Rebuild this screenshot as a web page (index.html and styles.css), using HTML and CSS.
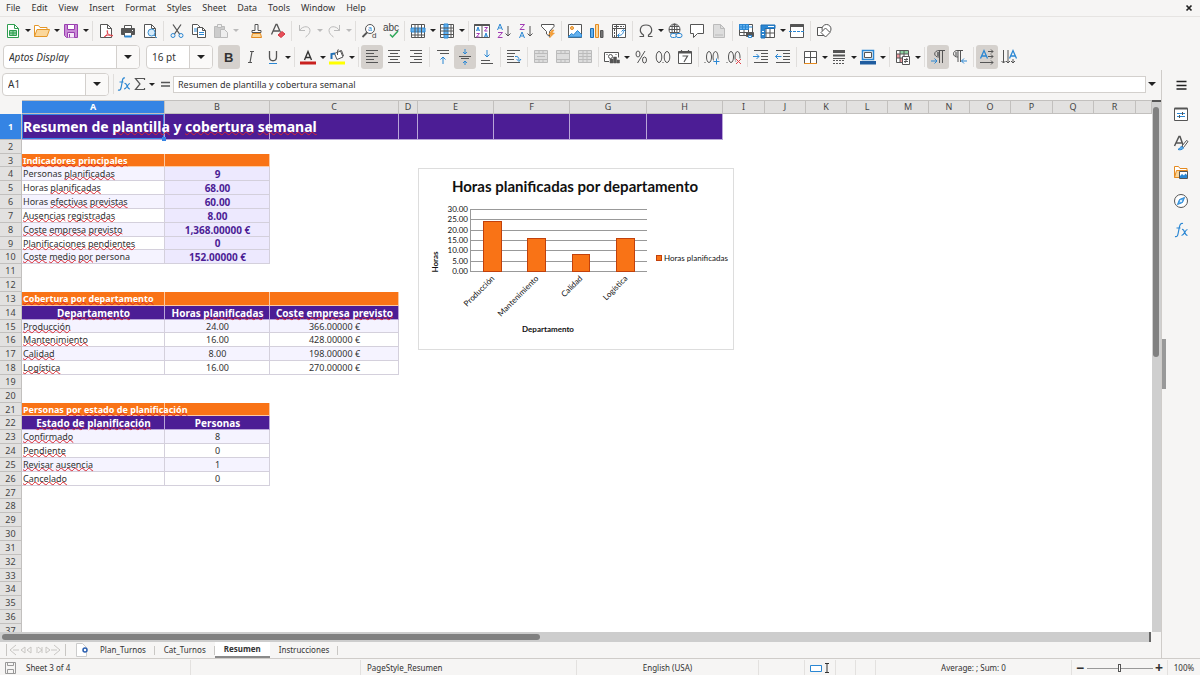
FILE: index.html
```html
<!DOCTYPE html>
<html lang="es">
<head>
<meta charset="utf-8">
<meta name="viewport" content="width=device-width, initial-scale=1">
<title>Resumen de plantilla</title>
<link rel="stylesheet" href="styles.css">
</head>
<body>
<div class="app">
<nav class="menubar" aria-label="Menu">
<button>File</button><button>Edit</button><button>View</button><button>Insert</button><button>Format</button><button>Styles</button><button>Sheet</button><button>Data</button><button>Tools</button><button>Window</button><button>Help</button>
<button class="close" aria-label="Close document"><svg class="icon small" viewBox="0 0 8 8"><path d="M1.500 1.500l5 5M6.500 1.500l-5 5" stroke="#222" stroke-width="1.700"/></svg></button>
</nav>

<div class="toolbar" role="toolbar" aria-label="Standard">
<button class="tool" aria-label="New"><svg class="icon" viewBox="0 0 16 16"><path d="M2.500 1.500h7l4 4v9h-11z" fill="#fff" stroke="#2f9e50"/><path d="M9.500 1.500v4h4" stroke="#2f9e50"/><path d="M4.500 7.500h7v5h-7zM4.500 10h7M8 7.500v5" fill="#8fd3a2" stroke="#2f9e50"/></svg></button><button class="drop" aria-label="New options"></button>
<button class="tool" aria-label="Open"><svg class="icon" viewBox="0 0 16 16"><path d="M.500 13.500v-11h4l1.500 2h7v2" fill="#fff" stroke="#e59728"/><path d="M3 6.500h12.500l-2.500 7H.500z" fill="#fbd79b" stroke="#e59728"/></svg></button><button class="drop" aria-label="Open options"></button>
<button class="tool" aria-label="Save"><svg class="icon" viewBox="0 0 16 16"><path d="M1.500 1.500h13v13h-11l-2-2z" fill="#c98ad6" stroke="#9a3fb0"/><path d="M4.500 1.500h7v5h-7z" fill="#fff" stroke="#9a3fb0"/><path d="M4.500 14.500v-5h7v5" fill="#f5e8f8" stroke="#9a3fb0"/><path d="M6.500 11v3.500" stroke="#9a3fb0"/></svg></button><button class="drop" aria-label="Save options"></button>
<i class="sep"></i>
<button class="tool" aria-label="Export as PDF"><svg class="icon" viewBox="0 0 16 16"><path d="M2.500 1.500h7l4 4v9h-11z" fill="#fff"/><path d="M9.500 1.500v4h4"/><path d="M7 13.500c3-2 3-5 2-6.500M9 8c0 3 3 5 5.500 5M6 14c2-2 5-2.500 9-1.500" stroke="#e0434c"/></svg></button>
<button class="tool" aria-label="Print"><svg class="icon" viewBox="0 0 16 16"><path d="M4.500 5V2.500h7V5" fill="#fff"/><path d="M1.500 5.500h13v6h-13z" fill="#555"/><path d="M12 7.500h1" stroke="#fff"/><path d="M4.500 9.500h7v4h-7z" fill="#fff"/><path d="M4.500 13.500h7" stroke="#2b87d3" stroke-width="2"/></svg></button>
<button class="tool" aria-label="Print preview"><svg class="icon" viewBox="0 0 16 16"><path d="M2.500 1.500h7l4 4v9h-11z" fill="#fff"/><path d="M9.500 1.500v4h4"/><circle cx="9.500" cy="9.500" r="3.500" fill="#d6ebfa" stroke="#3a8fd0"/><path d="M12 12l3 3" stroke="#3a8fd0"/></svg></button>
<i class="sep"></i>
<button class="tool" aria-label="Cut"><svg class="icon" viewBox="0 0 16 16"><path d="M4 1.500l6.500 9.500M12 1.500L5.500 11" stroke-width="1.300"/><circle cx="4" cy="12.500" r="2" stroke="#2b87d3"/><circle cx="12" cy="12.500" r="2" stroke="#2b87d3"/></svg></button>
<button class="tool" aria-label="Copy"><svg class="icon" viewBox="0 0 16 16"><path d="M1.500 1.500h5l3 3v7h-8z" fill="#fff"/><path d="M6.500 4.500h5l3 3v7h-8z" fill="#fff"/><path d="M11.500 4.500v3h3"/><path d="M3 6h3M3 8h3M8 9.500h5M8 11.500h5" stroke="#2b87d3"/></svg></button>
<button class="tool off" aria-label="Paste" disabled><svg class="icon" viewBox="0 0 16 16"><path d="M1.500 3.500h10v11h-10z" fill="#ccc"/><path d="M4.500 1.500h4v3h-4z" fill="#eee"/><path d="M7.500 6.500h4l3 3v5h-7z" fill="#eee"/></svg></button><button class="drop off" aria-label="Paste options" disabled></button>
<i class="sep clear"></i>
<button class="tool" aria-label="Clone formatting"><svg class="icon" viewBox="0 0 16 16"><path d="M7 7.500v-6h3v6h3v2H4v-2z" fill="#fff"/><path d="M4.500 10.500h8l1 4h-10z" fill="#fbd79b" stroke="#e58a1f"/></svg></button>
<button class="tool" aria-label="Clear formatting"><svg class="icon" viewBox="0 0 16 16"><path d="M1.500 11.500L6 1.500h1l3.500 8M3.500 8h5.500" stroke-width="1.300"/><path d="M8 12l4-3.500 3 2.500-4 3.500z" fill="#e8505a" stroke="#d23843"/></svg></button>
<i class="sep"></i>
<button class="tool off" aria-label="Undo" disabled><svg class="icon" viewBox="0 0 16 16"><path d="M2.500 2v5.500H8M2.500 7.500C6 2 13 3 13 7.500c0 3-2.500 5-4.500 6.500"/></svg></button><button class="drop off" aria-label="Undo options" disabled></button>
<button class="tool off" aria-label="Redo" disabled><svg class="icon" viewBox="0 0 16 16"><path d="M13.500 2v5.500H8M13.500 7.500C10 2 3 3 3 7.500c0 3 2.500 5 4.500 6.500"/></svg></button><button class="drop off" aria-label="Redo options" disabled></button>
<i class="sep"></i>
<button class="tool" aria-label="Find and replace"><svg class="icon" viewBox="0 0 16 16"><circle cx="9" cy="6" r="4.500" fill="#fff"/><path d="M6 9.500L1.500 14" stroke-width="1.800"/><text x="7" y="8" font-size="7" fill="#2b87d3">a</text><text x="11" y="15" font-size="8" fill="#444">d</text></svg></button>
<button class="tool" aria-label="Spelling"><svg class="icon" viewBox="0 0 16 16"><text x="0" y="8" font-size="10" fill="#444">abc</text><path d="M7 11.500l2.500 2.500 5.500-6" stroke="#2fa85a" stroke-width="1.500"/></svg></button>
<i class="sep"></i>
<button class="tool" aria-label="Row"><svg class="icon" viewBox="0 0 16 16"><path d="M1.500 1.500h13v13h-13z" fill="#fff"/><path d="M1 5h14v4H1z" fill="#63b1ee" stroke="#2b87d3"/><path d="M1.500 12h13M5 1.500v13M8 1.500v13M11.500 1.500v13"/></svg></button><button class="drop" aria-label="Row options"></button>
<button class="tool" aria-label="Column"><svg class="icon" viewBox="0 0 16 16"><path d="M1.500 1.500h13v13h-13z" fill="#fff"/><path d="M5 1h4v14H5z" fill="#63b1ee" stroke="#2b87d3"/><path d="M12 1.500v13M1.500 5h13M1.500 8h13M1.500 11.500h13"/></svg></button><button class="drop" aria-label="Column options"></button>
<i class="sep"></i>
<button class="tool" aria-label="Sort"><svg class="icon" viewBox="0 0 16 16"><path d="M.500 1.500h15v13H.500zM8 3v11.500" fill="#fff"/><path d="M.500 2h15" stroke-width="2"/><path d="M2.500 8l1.500-4 1.500 4M3 7h2M10.500 14l1.500-4 1.500 4M11 13h2" stroke="#2b87d3"/><path d="M2.500 10.500h3L2.500 14h3M10.500 4.500h3L10.500 8h3" stroke="#a23db5"/></svg></button>
<button class="tool" aria-label="Sort ascending"><svg class="icon" viewBox="0 0 16 16"><path d="M1.500 7L4 1l2.500 6M2.500 5h3" stroke="#2b87d3"/><path d="M2 9.500h4.500L2 14.500h4.500" stroke="#a23db5"/><path d="M12 3v10M9.500 10.500L12 13l2.500-2.500"/></svg></button>
<button class="tool" aria-label="Sort descending"><svg class="icon" viewBox="0 0 16 16"><path d="M1.500 15L4 9l2.500 6M2.500 13h3" stroke="#2b87d3"/><path d="M2 1.500h4.500L2 6.500h4.500" stroke="#a23db5"/><path d="M12 3v10M9.500 10.500L12 13l2.500-2.500"/></svg></button>
<button class="tool" aria-label="AutoFilter"><svg class="icon" viewBox="0 0 16 16"><path d="M1.500 1.500h12.500v2l-4.500 5v5l-3-2.500V8.500l-5-5z" fill="#fff"/><path d="M12 7l-3.500 4.500h2.500l-1.500 3.500 5-5h-2.500L14 7z" fill="#f8a13a" stroke="#e58a1f" stroke-width=".5"/></svg></button>
<i class="sep"></i>
<button class="tool" aria-label="Insert image"><svg class="icon" viewBox="0 0 16 16"><path d="M1.500 1.500h13v13h-13z" fill="#fff"/><circle cx="5" cy="5" r="1.500" fill="#f8c27c" stroke="#e58a1f"/><path d="M1.500 13.500l3-3 2 1.500 4-4.500 4 4v2.500h-13z" fill="#63b1ee" stroke="#2b87d3"/></svg></button>
<button class="tool" aria-label="Insert chart"><svg class="icon" viewBox="0 0 16 16"><path d="M1.500 5.500h3v9h-3z" fill="#63b1ee" stroke="#1f6fb5"/><path d="M6.500 1.500h3v13h-3z" fill="#fbd79b" stroke="#e58a1f"/><path d="M11.500 7.500h2.500v7h-2.500z" fill="#777"/></svg></button>
<button class="tool" aria-label="Pivot table"><svg class="icon" viewBox="0 0 16 16"><path d="M1.500 1.500h13v13h-13zM1.500 5.500h13M5.500 1.500v13" fill="#fff"/><path d="M3 3.500h10" stroke-dasharray="2 1"/><path d="M3.500 6v8" stroke-dasharray="2 1"/><path d="M7 12.500c4 0 5.500-2 5.500-5M10.500 8.500l2-2 2 2M8.500 10.500l-2 2 2 2" stroke="#2b87d3"/></svg></button>
<i class="sep"></i>
<button class="tool" aria-label="Special character"><svg class="icon" viewBox="0 0 16 16"><path d="M1.500 13.500h4v-1.500C.5 9 1.500 2 8 2s7.500 7 2.500 10v1.500h4" stroke-width="1.200"/></svg></button><button class="drop" aria-label="Special character options"></button>
<button class="tool" aria-label="Hyperlink"><svg class="icon" viewBox="0 0 16 16"><circle cx="7.500" cy="6.500" r="5.500" fill="#fff"/><path d="M2 6.500h11M3 3.500h9M3 9.500h9M7.500 1v11"/><ellipse cx="7.500" cy="6.500" rx="2.500" ry="5.500"/><rect x="3.500" y="10.500" width="6" height="4" rx="2" fill="#f6f5f4" stroke="#2b87d3"/><rect x="9" y="10.500" width="6" height="4" rx="2" fill="#f6f5f4" stroke="#2b87d3"/></svg></button>
<button class="tool" aria-label="Comment"><svg class="icon" viewBox="0 0 16 16"><path d="M1.500 1.500h13v9H8.500l-4 4v-4h-3z" fill="#fff"/></svg></button>
<button class="tool off" aria-label="Headers and footers" disabled><svg class="icon" viewBox="0 0 16 16"><path d="M2.500 1.500h7l4 4v9h-11z" fill="#ddd"/><path d="M9.500 1.500v4h4M4 12h8"/></svg></button>
<i class="sep"></i>
<button class="tool" aria-label="Print area"><svg class="icon" viewBox="0 0 16 16"><path d="M1.500 1.500h13v11h-13zM1.500 9.500h13M6 1.500v11M10.500 1.500v11" fill="#fff"/><path d="M1.500 1.500h9v5h-9zM1.500 4h13M4.500 1.500v5M7.500 1.500v5" fill="#63b1ee" stroke="#2b87d3"/><path d="M8.500 9.500h7v4h-7z" fill="#555"/><path d="M10.500 12.500h3v2h-3z" fill="#fff" stroke="#2b87d3"/></svg></button>
<button class="tool" aria-label="Freeze rows and columns"><svg class="icon" viewBox="0 0 16 16"><path d="M1.500 2.500h13v12h-13zM6 6v8.500M10 2.500v12M1.500 10h13" fill="#fff"/><path d="M1 2h14v3.500H5V15H1z" fill="#2b87d3" stroke="#1f6fb5"/><path d="M2 8.500h2M2 11.500h2M8 3.500h6" stroke="#fff"/></svg></button><button class="drop" aria-label="Freeze options"></button>
<button class="tool" aria-label="Split window"><svg class="icon" viewBox="0 0 16 16"><path d="M1.500 1.500h13v13h-13z" fill="#fff"/><path d="M1.500 2.500h13" stroke-width="3"/><path d="M0 8.500h16" stroke="#2b87d3" stroke-dasharray="3 1"/></svg></button>
<i class="sep"></i>
<button class="tool" aria-label="Draw functions"><svg class="icon" viewBox="0 0 16 16"><path d="M1.500 4.500h8v8h-8z" fill="#fff"/><circle cx="10.500" cy="6" r="4.500" fill="#fff"/><path d="M9.500 5l4.500 4.500-4.500 4.500L5 9.500z" fill="#fff"/></svg></button>
</div>

<div class="toolbar format" role="toolbar" aria-label="Formatting">
<label class="combo font"><select aria-label="Font name"><option>Aptos Display</option></select><i class="arrow"></i></label>
<label class="combo size"><select aria-label="Font size"><option>16 pt</option></select><i class="arrow"></i></label>
<button class="tool on" aria-label="Bold"><svg class="icon" viewBox="0 0 16 16"><text x="3" y="13" font-size="13" font-weight="700" fill="#333">B</text></svg></button>
<button class="tool" aria-label="Italic"><svg class="icon" viewBox="0 0 16 16"><path d="M7 2.500h4M5 13.500h4M9 2.500l-2 11" stroke-width="1.200"/></svg></button>
<button class="tool" aria-label="Underline"><svg class="icon" viewBox="0 0 16 16"><path d="M4.500 2v6c0 5 7 5 7 0V2" stroke-width="1.300"/><path d="M4 14.500h8" stroke="#2b87d3"/></svg></button><button class="drop" aria-label="Underline options"></button>
<i class="sep"></i>
<button class="tool" aria-label="Font color"><svg class="icon" viewBox="0 0 16 16"><path d="M4.500 11L8 2.500 11.500 11M5.500 8.500h5" stroke="#333" stroke-width="1.400"/><path d="M0 12.500h16v3H0z" fill="#c9211e" stroke="none"/></svg></button><button class="drop" aria-label="Font color options"></button>
<button class="tool" aria-label="Background color"><svg class="icon" viewBox="0 0 16 16"><path d="M5.500 4.500l6-2.500 2.500 6-6 2.500z" fill="#fff"/><path d="M8.500 6V1.500c0-1 1.500-1 1.500 0M11 2l1.500-.5L14.500 7"/><path d="M6 4.500L2.500 5v5" stroke="#1f6fb5" stroke-width="2"/><path d="M0 12.500h16v3H0z" fill="#ff0" stroke="none"/></svg></button><button class="drop" aria-label="Background color options"></button>
<i class="sep"></i>
<button class="tool on" aria-label="Align left"><svg class="icon" viewBox="0 0 16 16"><path d="M2 1.500h12M2 4.500h8M2 7.500h12M2 10.500h8M2 13.500h12"/></svg></button>
<button class="tool" aria-label="Align center"><svg class="icon" viewBox="0 0 16 16"><path d="M2 1.500h12M4 4.500h8M2 7.500h12M4 10.500h8M2 13.500h12"/></svg></button>
<button class="tool" aria-label="Align right"><svg class="icon" viewBox="0 0 16 16"><path d="M2 1.500h12M6 4.500h8M2 7.500h12M6 10.500h8M2 13.500h12"/></svg></button>
<i class="sep"></i>
<button class="tool" aria-label="Align top"><svg class="icon" viewBox="0 0 16 16"><path d="M2 1.500h12M5 4.500h9"/><path d="M8 15V8M5.500 10.500L8 8l2.500 2.500" stroke="#2b87d3"/></svg></button>
<button class="tool on" aria-label="Center vertically"><svg class="icon" viewBox="0 0 16 16"><path d="M2 7.500h12M4 9.500h8"/><path d="M8 0v5M6 3l2 2 2-2M8 16v-4M6 14l2-2 2 2" stroke="#2b87d3"/></svg></button>
<button class="tool" aria-label="Align bottom"><svg class="icon" viewBox="0 0 16 16"><path d="M2 14.500h12M2 11.500h9"/><path d="M8 1v7M5.500 5.500L8 8l2.500-2.500" stroke="#2b87d3"/></svg></button>
<i class="sep"></i>
<button class="tool" aria-label="Wrap text"><svg class="icon" viewBox="0 0 16 16"><path d="M1 1.500h13M1 4.500h8M1 7.500h7M1 10.500h7M1 13.500h13"/><path d="M9 7.500c3-.5 4 1 4 4M10.500 10l2.500 2.500 2-2.500" stroke="#2b87d3"/></svg></button>
<i class="sep"></i>
<button class="tool off" aria-label="Merge and center" disabled><svg class="icon" viewBox="0 0 16 16"><path d="M1.500 1.500h13v12h-13zM1.500 4.500h13M1.500 10.500h13M6 1.500v3M10 1.500v3M6 10.500v3M10 10.500v3M4 7.500h8" fill="#ddd"/></svg></button>
<button class="tool off" aria-label="Merge cells" disabled><svg class="icon" viewBox="0 0 16 16"><path d="M1.500 1.500h13v12h-13zM1.500 4.500h13M1.500 10.500h13M6 1.500v3M10 1.500v3M6 10.500v3M10 10.500v3" fill="#ddd"/></svg></button>
<button class="tool off" aria-label="Split cells" disabled><svg class="icon" viewBox="0 0 16 16"><path d="M1.500 1.500h13v12h-13zM1.500 4.500h13M1.500 10.500h13M6 1.500v12M10 1.500v12M1.500 7.500h13" fill="#ddd"/></svg></button>
<i class="sep"></i>
<button class="tool" aria-label="Currency"><svg class="icon" viewBox="0 0 16 16"><path d="M5 12.500H.500v-9h14v5" fill="#fff"/><circle cx="6.500" cy="7.500" r="2"/><path d="M2.500 5.500h1M11.500 5.500h1" /><path d="M6 10h3v4H6zM9.500 8h3v6h-3zM13 11h2.500v3H13z" fill="#555" stroke="#555" stroke-width=".5"/></svg></button><button class="drop" aria-label="Currency options"></button>
<button class="tool" aria-label="Percent"><svg class="icon" viewBox="0 0 16 16"><ellipse cx="5" cy="5" rx="2" ry="3"/><ellipse cx="11.500" cy="11" rx="2" ry="3"/><path d="M12 2L4.500 14"/></svg></button>
<button class="tool" aria-label="Number"><svg class="icon" viewBox="0 0 16 16"><ellipse cx="4" cy="8" rx="2.800" ry="5.500"/><ellipse cx="12" cy="8" rx="2.800" ry="5.500"/><path d="M7.500 13.500h1"/></svg></button>
<button class="tool" aria-label="Date"><svg class="icon" viewBox="0 0 16 16"><path d="M1.500 2.500h13v12h-13z" fill="#fff"/><path d="M1.500 3.500h13" stroke-width="2"/><path d="M4.500 1v3M11.500 1v3M5.500 7h5L7 13" stroke-width="1.200"/></svg></button>
<i class="sep"></i>
<button class="tool" aria-label="Add decimal place"><svg class="icon" viewBox="0 0 16 16"><path d="M.500 13.500h1"/><ellipse cx="5" cy="8" rx="2.500" ry="5.500"/><ellipse cx="11.500" cy="8" rx="2.500" ry="5.500"/><path d="M9.500 12.500h6M12.500 9.500v6" stroke="#f6f5f4" stroke-width="3"/><path d="M9.500 12.500h6M12.500 9.500v6" stroke="#2b87d3"/></svg></button>
<button class="tool" aria-label="Delete decimal place"><svg class="icon" viewBox="0 0 16 16"><path d="M.500 13.500h1"/><ellipse cx="5" cy="8" rx="2.500" ry="5.500"/><ellipse cx="11.500" cy="8" rx="2.500" ry="5.500"/><path d="M10 10l5 5M15 10l-5 5" stroke="#f6f5f4" stroke-width="3"/><path d="M10 10l5 5M15 10l-5 5" stroke="#e0434c"/></svg></button>
<i class="sep"></i>
<button class="tool" aria-label="Increase indent"><svg class="icon" viewBox="0 0 16 16"><path d="M1 1.500h14M8 4.500h7M8 7.500h7M8 10.500h7M1 13.500h14"/><path d="M0 7.500h6M3.500 5L6 7.500 3.500 10" stroke="#2b87d3"/></svg></button>
<button class="tool" aria-label="Decrease indent"><svg class="icon" viewBox="0 0 16 16"><path d="M1 1.500h14M8 4.500h7M8 7.500h7M8 10.500h7M1 13.500h14"/><path d="M.500 7.500h6M3 5L.500 7.500 3 10" stroke="#2b87d3"/></svg></button>
<i class="sep"></i>
<button class="tool" aria-label="Borders"><svg class="icon" viewBox="0 0 16 16"><path d="M2.500 14.500v-12h12v12M8.500 2.500v12M2.500 8.500h12" fill="#fff"/><path d="M2 14.500h13" stroke="#e58a1f"/></svg></button><button class="drop" aria-label="Borders options"></button>
<button class="tool" aria-label="Border style"><svg class="icon" viewBox="0 0 16 16"><path d="M2 2.500h12" stroke-width="3"/><path d="M2 6.500h12" stroke-width="2"/><path d="M2 9.500h12"/><path d="M2 11.500h12M2 14.500h12" stroke-dasharray="2 1"/></svg></button><button class="drop" aria-label="Border style options"></button>
<button class="tool" aria-label="Border color"><svg class="icon" viewBox="0 0 16 16"><path d="M2.500 1.500h11v9h-11z" stroke="#2b87d3" stroke-width="1.500"/><path d="M4.500 3.500h7v5h-7z" fill="#fff"/><path d="M0 12h16v3.500H0z" fill="#1f5c9f" stroke="none"/></svg></button><button class="drop" aria-label="Border color options"></button>
<i class="sep"></i>
<button class="tool" aria-label="Conditional formatting"><svg class="icon" viewBox="0 0 16 16"><path d="M1.500 1.500h12v12h-12z" fill="#fff"/><path d="M5 2h8v3H5z" fill="#8fd3a2" stroke="none"/><path d="M2 5h3v4H2zM5 9h4v4H5z" fill="#f09a9f" stroke="none"/><path d="M1.500 5h12M1.500 9h12M5 1.500v12M9 1.500v12"/><path d="M7.500 7.500h7v8h-7zM9 10.500h4M9 12.500h4M12 9l-2 5" fill="#fff"/></svg></button><button class="drop" aria-label="Conditional options"></button>
<i class="sep"></i>
<button class="tool on" aria-label="Left-to-right"><svg class="icon" viewBox="0 0 16 16"><path d="M10 1.500C3 1 3 8.500 9.500 8M9.500 14V1.500H15M12.500 1.500V14"/><path d="M7 3h2v4H7z" fill="#777" stroke="none"/><path d="M1 12h6M4.500 9.500L7 12l-2.500 2.500" stroke="#2b87d3"/></svg></button>
<button class="tool" aria-label="Right-to-left"><svg class="icon" viewBox="0 0 16 16"><path d="M6 1.500C0 1 0 8.500 6 8M6 13V1.500h5M8.500 1.500V13"/><path d="M3 3h3v4H3z" fill="#999" stroke="none"/><path d="M9.500 12H15M12 9.500L9.500 12l2.500 2.500" stroke="#2b87d3"/></svg></button>
<i class="sep"></i>
<button class="tool on" aria-label="Text direction left to right"><svg class="icon" viewBox="0 0 16 16"><path d="M1.500 9.500L5 1.500l3.500 8M3 7h4" stroke="#2b87d3" stroke-width="1.300"/><path d="M9 2.500h5M12 .5l2 2-2 2M9 7.500h5M12 5.500l2 2-2 2M1 13.500h13M12 11.500l2 2-2 2"/></svg></button>
<button class="tool" aria-label="Text direction top to bottom"><svg class="icon" viewBox="0 0 16 16"><path d="M8.500 9.500L12 1.500l3.500 8M10 7h4" stroke="#2b87d3" stroke-width="1.300"/><path d="M2.500 1v13M.5 12l2 2 2-2M7 1v13M5 12l2 2 2-2M12 10v4M10 12l2 2 2-2"/></svg></button>
</div>

<div class="workspace">
<main class="document">
<div class="formula-bar">
<div class="combo name"><input aria-label="Name box" value="A1"><button class="arrow" aria-label="Name box list"></button></div>
<i class="sep"></i>
<button class="tool fx" aria-label="Function wizard"><svg class="icon" viewBox="0 0 16 16"><path d="M9 2C6.500 1.500 6.500 4 6 7l-1 5c-.5 2-1.500 2.500-3 2M3.500 6h4M8.500 7.500c3-1 2 5.500 5.500 5.500M14 7.500c-2.500 0-3 5.500-6 5.500" stroke="#2b87d3" stroke-width="1.200"/></svg></button>
<button class="tool fx" aria-label="Select function"><svg class="icon" viewBox="0 0 16 16"><path d="M12.500 4V2.500h-9L8 8l-4.500 5.500h9V12" stroke-width="1.200"/></svg></button><button class="drop" aria-label="Function list"></button>
<button class="tool fx" aria-label="Formula"><svg class="icon" viewBox="0 0 16 16"><path d="M4 6.500h9M4 10h9" stroke-width="1.300"/></svg></button>
<input class="formula" aria-label="Input line" value="Resumen de plantilla y cobertura semanal">
<button class="drop wide" aria-label="Expand formula bar"></button>
</div>

<div class="sheet-area">
<div class="sheet">
<table class="grid">
<colgroup><col class="w-head"><col class="w-a"><col class="w-b"><col class="w-c"><col class="w-d"><col class="w-e"><col class="w-e"><col class="w-g"><col class="w-e"><col class="w-i"><col class="w-j"><col class="w-j"><col class="w-j"><col class="w-j"><col class="w-j"><col class="w-j"><col class="w-i"><col class="w-j"><col class="w-i"><col></colgroup>
<thead><tr><td class="corner"></td><th class="sel">A</th><th>B</th><th>C</th><th>D</th><th>E</th><th>F</th><th>G</th><th>H</th><th>I</th><th>J</th><th>K</th><th>L</th><th>M</th><th>N</th><th>O</th><th>P</th><th>Q</th><th>R</th><th></th></tr></thead>
<tbody>
<tr class="title"><th class="sel">1</th><td class="active">Resumen de <u>plantilla</u> y <u>cobertura</u> <u>semanal</u><i class="handle"></i></td><td></td><td></td><td></td><td></td><td></td><td></td><td></td><td class="blank" colspan="11"></td></tr>
<tr><th>2</th><td class="blank" colspan="19"></td></tr>
<tr class="section"><th>3</th><td><u>Indicadores</u> <u>principales</u></td><td></td><td class="blank" colspan="17"></td></tr>
<tr class="kpi odd"><th>4</th><td>Personas <u>planificadas</u></td><td>9</td><td class="blank" colspan="17"></td></tr>
<tr class="kpi"><th>5</th><td>Horas <u>planificadas</u></td><td>68.00</td><td class="blank" colspan="17"></td></tr>
<tr class="kpi odd"><th>6</th><td>Horas <u>efectivas</u> <u>previstas</u></td><td>60.00</td><td class="blank" colspan="17"></td></tr>
<tr class="kpi"><th>7</th><td><u>Ausencias</u> <u>registradas</u></td><td>8.00</td><td class="blank" colspan="17"></td></tr>
<tr class="kpi odd"><th>8</th><td><u>Coste</u> <u>empresa</u> <u>previsto</u></td><td>1,368.00000 €</td><td class="blank" colspan="17"></td></tr>
<tr class="kpi"><th>9</th><td><u>Planificaciones</u> <u>pendientes</u></td><td>0</td><td class="blank" colspan="17"></td></tr>
<tr class="kpi odd"><th>10</th><td><u>Coste</u> <u>medio</u> <u>por</u> persona</td><td>152.00000 €</td><td class="blank" colspan="17"></td></tr>
<tr><th>11</th><td class="blank" colspan="19"></td></tr>
<tr><th>12</th><td class="blank" colspan="19"></td></tr>
<tr class="section"><th>13</th><td><u>Cobertura</u> <u>por</u> <u>departamento</u></td><td></td><td></td><td class="blank" colspan="16"></td></tr>
<tr class="heads"><th>14</th><td><u>Departamento</u></td><td>Horas <u>planificadas</u></td><td><u>Coste</u> <u>empresa</u> <u>previsto</u></td><td class="blank" colspan="16"></td></tr>
<tr class="data odd"><th>15</th><td><u>Producción</u></td><td>24.00</td><td>366.00000 €</td><td class="blank" colspan="16"></td></tr>
<tr class="data"><th>16</th><td><u>Mantenimiento</u></td><td>16.00</td><td>428.00000 €</td><td class="blank" colspan="16"></td></tr>
<tr class="data odd"><th>17</th><td><u>Calidad</u></td><td>8.00</td><td>198.00000 €</td><td class="blank" colspan="16"></td></tr>
<tr class="data"><th>18</th><td><u>Logística</u></td><td>16.00</td><td>270.00000 €</td><td class="blank" colspan="16"></td></tr>
<tr><th>19</th><td class="blank" colspan="19"></td></tr>
<tr><th>20</th><td class="blank" colspan="19"></td></tr>
<tr class="section"><th>21</th><td>Personas <u>por</u> <u>estado</u> <u>de</u> <u>planificación</u></td><td></td><td class="blank" colspan="17"></td></tr>
<tr class="heads"><th>22</th><td><u>Estado</u> <u>de</u> <u>planificación</u></td><td>Personas</td><td class="blank" colspan="17"></td></tr>
<tr class="data odd"><th>23</th><td><u>Confirmado</u></td><td>8</td><td class="blank" colspan="17"></td></tr>
<tr class="data"><th>24</th><td><u>Pendiente</u></td><td>0</td><td class="blank" colspan="17"></td></tr>
<tr class="data odd"><th>25</th><td><u>Revisar</u> <u>ausencia</u></td><td>1</td><td class="blank" colspan="17"></td></tr>
<tr class="data"><th>26</th><td><u>Cancelado</u></td><td>0</td><td class="blank" colspan="17"></td></tr>
<tr><th>27</th><td class="blank" colspan="19"></td></tr>
<tr><th>28</th><td class="blank" colspan="19"></td></tr>
<tr><th>29</th><td class="blank" colspan="19"></td></tr>
<tr><th>30</th><td class="blank" colspan="19"></td></tr>
<tr><th>31</th><td class="blank" colspan="19"></td></tr>
<tr><th>32</th><td class="blank" colspan="19"></td></tr>
<tr><th>33</th><td class="blank" colspan="19"></td></tr>
<tr><th>34</th><td class="blank" colspan="19"></td></tr>
<tr><th>35</th><td class="blank" colspan="19"></td></tr>
<tr><th>36</th><td class="blank" colspan="19"></td></tr>
<tr><th>37</th><td class="blank" colspan="19"></td></tr>
</tbody>
</table>
<svg class="chart" viewBox="0 0 316 182" role="img" aria-label="Horas planificadas por departamento">
<rect x="0.500" y="0.500" width="315" height="181" fill="#fff" stroke="#ddd"/>
<text class="chart-title" x="157" y="24" text-anchor="middle">Horas planificadas por departamento</text>
<g stroke="#999" stroke-width="1"><path d="M52 41.500h177M52 51.500h177M52 62.500h177M52 72.500h177M52 82.500h177M52 93.500h177M52 103.500h177M52.500 41v63"/></g>
<g text-anchor="end"><text x="50" y="44">30.00</text><text x="50" y="54">25.00</text><text x="50" y="65">20.00</text><text x="50" y="75">15.00</text><text x="50" y="85">10.00</text><text x="50" y="96">5.00</text><text x="50" y="106">0.00</text></g>
<g fill="#f97316" stroke="#c2410c" stroke-width="1"><rect x="65.500" y="53.500" width="18" height="50"/><rect x="109.500" y="70.500" width="18" height="33"/><rect x="154.500" y="86.500" width="17" height="17"/><rect x="198.500" y="70.500" width="18" height="33"/></g>
<g text-anchor="end"><text transform="translate(77 111) rotate(-45)">Producción</text><text transform="translate(121 111) rotate(-45)">Mantenimiento</text><text transform="translate(165 111) rotate(-45)">Calidad</text><text transform="translate(210 111) rotate(-45)">Logística</text></g>
<text class="axis" text-anchor="middle" transform="translate(20 94) rotate(-90)">Horas</text>
<text class="axis" x="130" y="164" text-anchor="middle">Departamento</text>
<rect x="238.500" y="87.500" width="5" height="5" fill="#f97316" stroke="#c2410c"/>
<text x="246" y="93">Horas planificadas</text>
</svg>
</div>
<div class="vscroll"><i></i></div>
</div>
<div class="hscroll"><i></i></div>

<div class="tabs">
<svg class="nav-icons" viewBox="0 0 62 14"><path d="M1.500 1v12M11 2L5 7l6 5M8 7h6M20 4l-4 3 4 3zM26 4l-4 3 4 3zM32 4v6M37 4v6M33 4l4 3-4 3M41 4l4 3-4 3zM49 2l6 5-6 5M46 7h6M60.500 1v12" fill="none" stroke="#c8c6c3"/></svg>
<button class="add" aria-label="Add sheet"><svg class="icon" viewBox="0 0 16 16"><path d="M2.500 1.500h6l4 4v9h-10z" fill="#fff" stroke="#ccc"/><circle cx="11" cy="8" r="2" fill="#fff" stroke="#2a5fb0" stroke-width="1.500"/></svg></button>
<button class="tab">Plan_Turnos</button><button class="tab">Cat_Turnos</button><button class="tab current">Resumen</button><button class="tab">Instrucciones</button>
</div>
</main>

<aside class="sidebar" aria-label="Sidebar">
<button aria-label="Sidebar settings"><svg class="icon" viewBox="0 0 16 16"><path d="M3.500 4.500h10M3.500 8.500h10M3.500 12h10" stroke="#222" stroke-width="1.300"/></svg></button>
<button aria-label="Properties"><svg class="icon" viewBox="0 0 16 16"><path d="M1.500 2.500h13v12h-13z" fill="#fff"/><path d="M1.500 2.500h13" stroke-width="2"/><path d="M4 7.500h8M4 10.500h8" stroke="#2b87d3"/><path d="M9.500 6v3M6.500 9v3"/></svg></button>
<button aria-label="Styles"><svg class="icon" viewBox="0 0 16 16"><path d="M1.500 11L6 1.500h1L10 10M3.500 8h5" stroke-width="1.500"/><path d="M9 11l4.500-5.500 1.500 1-4.500 6z" fill="#fff"/><path d="M5 14.500c1 0 2-3 4-3l1.500 1.500c-1 2-4 2-5.500 1.500z" fill="#63b1ee" stroke="#2b87d3"/></svg></button>
<button aria-label="Gallery"><svg class="icon" viewBox="0 0 16 16"><path d="M1.500 13.500v-11h4l1.500 2h7v2" fill="#fff" stroke="#e58a1f"/><path d="M1.500 13.500l2-7h11v7z" fill="#fbd79b" stroke="#e58a1f"/><path d="M6.500 7.500h8v7h-8z" fill="#fff"/><path d="M7 14v-2l2-2 2 1.500 1.500-2L14 11v3z" fill="#2b87d3" stroke="none"/></svg></button>
<button aria-label="Navigator"><svg class="icon" viewBox="0 0 16 16"><circle cx="8" cy="8" r="6.500" fill="#fff"/><path d="M11.500 4.500l-2 5-5 2 2-5z" fill="#63b1ee" stroke="#2b87d3"/><circle cx="8" cy="8" r="1" fill="#fff" stroke="none"/></svg></button>
<button aria-label="Functions"><svg class="icon" viewBox="0 0 16 16"><path d="M10 1.500C7 .500 6.500 4 6 7l-1 5c-.5 2.500-1.500 3-3 2.500M3.500 6h4M9 7.500c3-1 2 6 5.500 6M14.500 7.500c-2.500 0-3 6-6 6" stroke="#2b87d3" stroke-width="1.200"/></svg></button>
<i class="grip"></i>
</aside>
</div>

<footer class="status">
<span><svg class="icon" viewBox="0 0 16 16"><path d="M3.500 2.500h10v11h-10zM5.500 2.500h6v3h-6zM5.500 13.500v-4h6v4" stroke="#999"/></svg></span>
<span class="left">Sheet 3 of 4</span><span></span><span class="left">PageStyle_Resumen</span><span>English (USA)</span><span></span>
<span><svg class="select-icon" viewBox="0 0 22 12"><path d="M1.500 3.500h11v6h-11z" fill="#fff" stroke="#2b87d3"/><path d="M16 1.500h4M18 1.500v9M16 10.500h4" fill="none" stroke="#333"/></svg></span>
<span></span><span></span><span>Average: ; Sum: 0</span>
<span class="zoom"><button aria-label="Zoom out">−</button><input type="range" min="0" max="100" value="50" aria-label="Zoom"><button aria-label="Zoom in">+</button></span>
<span>100%</span>
</footer>
</div>
</body>
</html>
```
FILE: styles.css
```css
* { box-sizing: border-box; }
body {
  margin: 0;
  background: #f6f5f4;
  color: #333;
  font: 9px/12px "Noto Sans", sans-serif;
}
button, input, select {
  margin: 0;
  padding: 0;
  border: 0;
  background: none;
  color: inherit;
  font: inherit;
}
.app { display: flex; flex-direction: column; height: 100vh; overflow: hidden; }
.icon { display: block; width: 16px; height: 16px; fill: none; stroke: #555; flex: none; overflow: visible; }
.icon text { stroke: none; font-family: "Liberation Sans", sans-serif; }
.icon.small { width: 8px; height: 8px; }

.menubar { display: flex; flex: none; gap: 11px; height: 17px; padding: 0 7px 0 6px; border-bottom: 1px solid #e6e4e2; }
.menubar .close { margin-left: auto; }

.toolbar { display: flex; flex: none; align-items: center; height: 27px; padding-left: 2px; }
.toolbar.format { height: 26px; }
.tool { display: flex; flex: none; align-items: center; justify-content: center; width: 22px; height: 24px; border-radius: 3px; }
.tool.on { background: #d5d1cd; }
.tool.off .icon { stroke: #bbb; }
.drop { display: flex; flex: none; align-items: center; justify-content: center; width: 7px; height: 24px; }
.drop::before, .arrow::before {
  content: "";
  border: 3px solid transparent;
  border-top-color: #222;
  border-bottom: 0;
}
.drop.off::before { border-top-color: #bbb; }
.sep { flex: none; width: 1px; height: 20px; margin: 0 2px; background: #e0dedc; }
.drop + .sep { margin-left: 3px; }
.sep.clear { background: none; }

.combo { position: relative; display: flex; flex: none; height: 24px; border: 1px solid #d3d0cd; border-radius: 4px; background: #fff; overflow: hidden; }
.combo select, .combo input { flex: 1; min-width: 0; padding-left: 5px; appearance: none; outline: 0; }
.combo select { font-size: 10px; }
.combo.font { width: 137px; margin: 0 6px 0 1px; font-style: italic; }
.combo.size { width: 67px; margin-right: 5px; }
.combo.name { width: 107px; height: 23px; margin-right: 2px; font-size: 10px; }
.arrow { display: flex; flex: none; align-items: center; justify-content: center; width: 23px; border-left: 1px solid #d3d0cd; background: #faf9f8; }
.combo > i.arrow { position: absolute; top: 0; right: 0; bottom: 0; pointer-events: none; }
.arrow::before { border-width: 4px 4px 0; }

.workspace { display: flex; flex: 1; min-height: 0; }
.document { display: flex; flex: 1; flex-direction: column; min-width: 0; }
.formula-bar { display: flex; flex: none; align-items: center; height: 30px; padding: 0 6px 2px 2px; }
.tool.fx { width: 16px; }
.formula-bar .drop { margin-right: 2px; }
.formula { flex: 1; min-width: 0; height: 17px; padding: 0 4px; border: 1px solid #d3d0cd; background: #fff; }
.formula-bar .drop.wide { margin: 0 0 0 2px; }
.drop.wide::before { border-width: 4px 4px 0; }

.sheet-area { display: flex; flex: 1; min-height: 0; }
.sheet { position: relative; flex: 1; min-width: 0; overflow: hidden; background: #fff; }
.grid { width: 100%; table-layout: fixed; border-collapse: separate; border-spacing: 0; }
.w-head { width: 22px; } .w-a { width: 143px; } .w-b { width: 105px; } .w-c { width: 129px; } .w-d { width: 19px; }
.w-e { width: 76px; } .w-g { width: 77px; } .w-i { width: 42px; } .w-j { width: 41px; }
.grid th, .grid td { height: 14px; padding: 0; line-height: 12px; white-space: nowrap; }
.grid tbody tr:nth-child(6n + 3) > * { height: 13px; line-height: 11px; }
.grid th { border: solid #c2c0be; border-width: 0 1px 1px 0; background: #e2e1e0; color: #444; font-weight: 400; text-align: center; }
.grid thead th { border-top-width: 1px; }
.grid th.sel { background: #3584e4; color: #fff; font-weight: 700; }
.grid .corner { background: #f6f5f4; border: 0; }
.grid td { padding-left: 1px; border: solid #d4d0dc; border-width: 0 1px 1px 0; }
.grid td.blank { border: 0; background: none; }
.grid u { text-decoration: underline wavy #d9262e 1px; text-underline-offset: -1px; text-decoration-skip-ink: none; }

.grid .title > * { height: 26px; }
.title td { background: #4c1d95; border-color: #b9a5d8; color: #fff; font-size: 14px; font-weight: 700; }
.title td.active { position: relative; box-shadow: inset 0 0 0 1px #3584e4; }
.handle { position: absolute; right: -2px; bottom: -2px; width: 4px; height: 4px; background: #3584e4; }
.section td { background: #f97316; border-color: #fbc9a3; color: #fff; font-weight: 700; }
.heads td { background: #4c1d95; border-color: #b9a5d8; color: #fff; font-size: 10px; font-weight: 700; text-align: center; }
.odd td { background: #f5f3ff; }
.grid .kpi td:nth-child(3) { background: #ede9fe; color: #4c1d95; font-size: 10px; font-weight: 700; text-align: center; }
.grid .kpi td.blank { background: none; }
.data td + td { text-align: center; }

.chart { position: absolute; left: 418px; top: 68px; width: 316px; height: 182px; font: 8px Lato, sans-serif; fill: #111; }
.chart-title { font-size: 15px; font-weight: 700; }
.axis { font-weight: 700; }

.vscroll { flex: none; width: 9px; padding: 5px 1px; border-top: 2px solid #555; background: #cfcfcf; }
.vscroll i { display: block; width: 6px; height: 48%; border-radius: 3px; background: #808080; }
.hscroll { flex: none; height: 10px; margin-right: 10px; padding: 2px; border-right: 2px solid #666; background: #cdcdcd; }
.hscroll i { display: block; width: 47%; height: 6px; border-radius: 3px; background: #808080; }

.tabs { display: flex; flex: none; height: 16px; padding-left: 5px; font-size: 8px; }
.nav-icons { flex: none; width: 62px; height: 14px; margin: 1px 7px 0 0; }
.add { width: 17px; }
.tab { padding: 0 9px; background: linear-gradient(#c9c7c4, #c9c7c4) right center / 1px 9px no-repeat; }
.tab.current { border-bottom: 2px solid #8a8a8a; background: #fff; font-weight: 700; }

.sidebar { position: relative; display: flex; flex: none; flex-direction: column; align-items: center; gap: 13px; width: 39px; padding-top: 7px; border-left: 1px solid #cfccc9; }
.grip { position: absolute; left: 0; top: 269px; width: 4px; height: 50px; background: #999; }

.status {
  display: grid;
  flex: none;
  grid-template-columns: 20px 171px 170px 216fr 182fr 46px 31px 20px 20px 196fr 96px 32px;
  height: 17px;
  padding: 1px 0;
  border-top: 1px solid #cfccc9;
  font-size: 8px;
}
.status > span { display: flex; align-items: center; justify-content: center; border-right: 1px solid #e3e1df; }
.status > span:last-child, .status > span:first-child { border-right: 0; }
.status > .left { justify-content: flex-start; padding-left: 6px; }
.select-icon { width: 22px; height: 12px; }
.zoom button { width: 9px; font-size: 14px; font-weight: 700; }
.zoom input { width: 66px; height: 12px; margin: 0 2px; appearance: none; background: linear-gradient(#999, #999) center / 100% 1px no-repeat; }
.zoom input::-webkit-slider-thumb { appearance: none; width: 3px; height: 8px; border: 1px solid #555; background: #fff; }
```
